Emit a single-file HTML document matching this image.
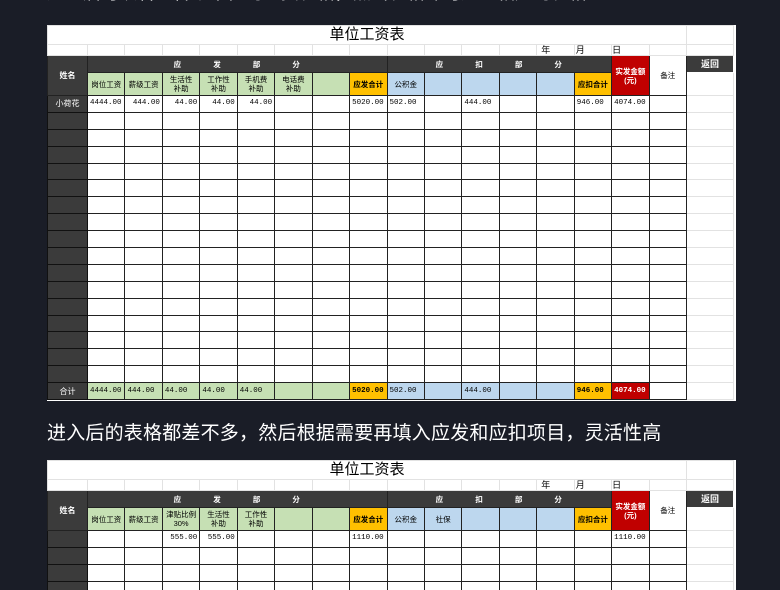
<!DOCTYPE html>
<html><head><meta charset="utf-8">
<style>
body{margin:0;width:780px;height:585px;overflow:hidden;background:#1a1d27;font-family:"Liberation Sans","Noto Sans CJK SC",sans-serif;position:relative}
.top{position:absolute;left:47px;top:-21px;color:#fff;font-size:18px;white-space:nowrap}
.cap{position:absolute;left:47px;top:418px;color:#fff;font-size:19px;white-space:nowrap;letter-spacing:0.2px}
.sheet{position:absolute;left:47px;width:689px;background:#fff;overflow:hidden}
.sheet table{border-collapse:collapse;table-layout:fixed;position:absolute;left:0;top:0}
td{padding:0;font-size:7.5px;text-align:center;overflow:hidden;white-space:nowrap;line-height:9px;color:#000}
td.g{border:1px solid #e2e2e2}
td.b{border:1px solid #222}
.dk{background:#3b3b3b;color:#fff;font-weight:bold}
.gr{background:#c6e0b4}
.bl{background:#bdd7ee}
.ye{background:#ffc000;font-weight:bold}
.rd{background:#c00000;color:#fff;font-weight:bold}
.num{text-align:right;padding-right:2px;font-family:"Liberation Mono","DejaVu Sans Mono",monospace;font-size:7.5px}
.numl{text-align:left;padding-left:2px;font-family:"Liberation Mono","DejaVu Sans Mono",monospace;font-size:7.5px}
.title{font-size:15px;line-height:18px}
</style></head><body>
<div class="top">进入后可以看到各个单位的工资表格，点击表格即可进入相应的表格</div>
<div class="sheet" id="s1" style="top:25px;height:376px"></div>
<div class="cap">进入后的表格都差不多，然后根据需要再填入应发和应扣项目，灵活性高</div>
<div class="sheet" id="s2" style="top:460px;height:130px"></div>
<script>
function build(id,h2,rowsData,nrows,total){
 var W=[40];for(var i=0;i<16;i++)W.push(37.45);W.push(47);
 var s='<table><colgroup>';W.forEach(function(w){s+='<col style="width:'+w+'px">'});s+='</colgroup>';
 s+='<tr style="height:19px"><td class="g title" colspan="17">单位工资表</td><td class="g"></td></tr>';
 s+='<tr style="height:11px">';
 for(var i=0;i<18;i++){var t='';if(i==13)t='年';if(i==14)t='月';if(i==15)t='日';
  s+='<td class="g" style="font-size:9px;line-height:10px;text-align:'+(i>=13&&i<=15?'left':'center')+';padding-left:'+(i==13?'4px':i==14?'1px':'0')+'">'+t+'</td>'}
 s+='</tr>';
 s+='<tr style="height:17px"><td class="b dk" rowspan="2" style="font-size:8px">姓名</td>'+
  '<td class="b dk" colspan="8" style="word-spacing:28px;letter-spacing:1px">应 发 部 分</td>'+
  '<td class="b dk" colspan="6" style="word-spacing:28px;letter-spacing:1px">应 扣 部 分</td>'+
  '<td class="b rd" rowspan="2">实发金额<br>(元)</td><td class="b" rowspan="2">备注</td>'+
  '<td class="dk" style="font-size:9px;border:1px solid #fff">返回</td></tr>';
 s+='<tr style="height:23px">';
 h2.forEach(function(c){s+='<td class="b '+c[1]+'">'+c[0]+'</td>'});
 s+='<td class="g"></td></tr>';
 for(var r=0;r<nrows;r++){
  var d=rowsData[r]||[];var isT=(total&&r==nrows-1);
  s+='<tr style="height:16.9px"><td class="b dk" style="font-weight:normal;font-size:8px;border-color:#111">'+(d[0]||'')+'</td>';
  for(var c=1;c<17;c++){
   var v=d[c]||'',cls='b';
   if(isT){cls+=' '+(c<=7?'gr':c==8?'ye':c<=13?'bl':c==14?'ye':c==15?'rd':'');}
   s+='<td class="'+cls+' '+(v&&v!=='4444.00'&&c<8&&!isT?'num':'numl')+'" style="'+(isT&&(c==8||c==14||c==15)?'font-weight:bold;':'')+'">'+v+'</td>';
  }
  s+='<td class="g"></td></tr>';
 }
 s+='</table>';document.getElementById(id).innerHTML=s;
}
var h1=[['岗位工资','gr'],['薪级工资','gr'],['生活性<br>补助','gr'],['工作性<br>补助','gr'],['手机费<br>补助','gr'],['电话费<br>补助','gr'],['','gr'],['应发合计','ye'],['公积金','bl'],['','bl'],['','bl'],['','bl'],['','bl'],['应扣合计','ye']];
var d1=[];d1[0]=['小荷花','4444.00','444.00','44.00','44.00','44.00','','','5020.00','502.00','','444.00','','','946.00','4074.00',''];
d1[17]=['合计','4444.00','444.00','44.00','44.00','44.00','','','5020.00','502.00','','444.00','','','946.00','4074.00',''];
build('s1',h1,d1,18,true);
var h2=[['岗位工资','gr'],['薪级工资','gr'],['津贴比例<br>30%','gr'],['生活性<br>补助','gr'],['工作性<br>补助','gr'],['','gr'],['','gr'],['应发合计','ye'],['公积金','bl'],['社保','bl'],['','bl'],['','bl'],['','bl'],['应扣合计','ye']];
var d2=[];d2[0]=['','','','555.00','555.00','','','','1110.00','','','','','','','1110.00',''];
build('s2',h2,d2,4,false);
</script>
</body></html>
